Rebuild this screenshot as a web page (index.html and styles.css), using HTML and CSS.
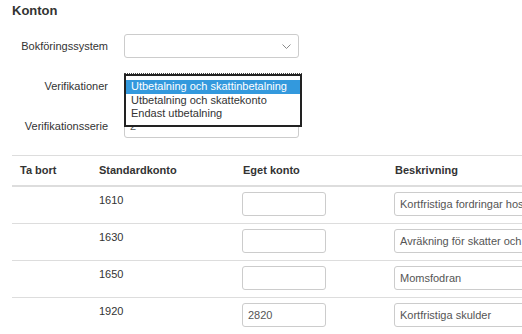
FILE: index.html
```html
<!DOCTYPE html>
<html lang="sv">
<head>
<meta charset="utf-8">
<link rel="stylesheet" href="styles.css">
</head>
<body>
<div class="page">
  <h2 class="title">Konton</h2>
  <div class="form">
    <label class="label">Bokföringssystem</label>
    <div class="control">
      <div class="select">
        <svg class="chev" width="9" height="5" viewBox="0 0 9 5"><polyline points="0.5,0.5 4.5,4.5 8.5,0.5" fill="none" stroke="#8a8a8a" stroke-width="1"/></svg>
      </div>
    </div>
    <label class="label">Verifikationer</label>
    <div class="control">
      <div class="select"></div>
      <div class="listbox">
        <div class="listbox-inner">
          <div class="opt selected">Utbetalning och skattinbetalning</div>
          <div class="opt">Utbetalning och skattekonto</div>
          <div class="opt">Endast utbetalning</div>
        </div>
      </div>
    </div>
    <label class="label">Verifikationsserie</label>
    <div class="control">
      <div class="input wide">2</div>
    </div>
  </div>

  <table class="grid">
    <colgroup>
      <col class="c1"><col class="c2"><col class="c3"><col class="c4">
    </colgroup>
    <thead>
      <tr><th>Ta bort</th><th>Standardkonto</th><th>Eget konto</th><th>Beskrivning</th></tr>
    </thead>
    <tbody>
      <tr><td></td><td>1610</td><td><div class="input small"></div></td><td><div class="input desc">Kortfristiga fordringar hos koncernföretag</div></td></tr>
      <tr><td></td><td>1630</td><td><div class="input small"></div></td><td><div class="input desc">Avräkning för skatter och avgifter</div></td></tr>
      <tr><td></td><td>1650</td><td><div class="input small"></div></td><td><div class="input desc">Momsfodran</div></td></tr>
      <tr><td></td><td>1920</td><td><div class="input small">2820</div></td><td><div class="input desc">Kortfristiga skulder</div></td></tr>
    </tbody>
  </table>
</div>
</body>
</html>
```

FILE: styles.css
```css
html, body {
  margin: 0;
  padding: 0;
  overflow: hidden;
  background: #fff;
}
body {
  font-family: "Liberation Sans", Arial, sans-serif;
  font-size: 11px;
  color: #333;
}
.page {
  padding: 3px 0 0 12px;
}
.title {
  margin: 0;
  font-size: 13px;
  line-height: 15px;
  font-weight: bold;
  color: #333;
}
.form {
  margin-top: 16px;
  display: grid;
  grid-template-columns: 96px 175px;
  column-gap: 16px;
  row-gap: 16px;
}
.label {
  text-align: right;
  line-height: 24px;
  height: 24px;
  color: #333;
}
.control {
  position: relative;
  height: 24px;
}
.select, .input {
  box-sizing: border-box;
  height: 24px;
  border: 1px solid #ccc;
  border-radius: 3px;
  background: #fff;
  line-height: 22px;
  padding: 0 5px;
  color: #555;
  white-space: nowrap;
  overflow: hidden;
}
.select {
  position: relative;
}
.chev {
  position: absolute;
  right: 7px;
  top: 9px;
}
.listbox {
  position: absolute;
  left: 0;
  top: -1px;
  width: 178px;
  box-sizing: border-box;
  border-top: 1px dotted #444;
  z-index: 2;
}
.listbox-inner {
  border: 2px solid #222;
  border-top-width: 2px;
  background: #fff;
  padding: 4px 0 4px 0;
}
.opt {
  line-height: 13px;
  height: 13.5px;
  padding-left: 5px;
  color: #333;
  white-space: nowrap;
}
.opt.selected {
  background: #3399dd;
  color: #fff;
}
.grid {
  margin-top: 17px;
  border-collapse: collapse;
  table-layout: fixed;
  width: 600px;
}
.c1 { width: 79px; }
.c2 { width: 144px; }
.c3 { width: 152px; }
.c4 { width: 225px; }
.grid th {
  text-align: left;
  font-weight: bold;
  line-height: 15px;
  padding: 7px 8px;
  border-top: 1px solid #ddd;
  border-bottom: 2px solid #ddd;
  color: #333;
}
.grid td {
  line-height: 15px;
  padding: 6px 8px;
  vertical-align: top;
  border-top: 1px solid #ddd;
  color: #333;
}
.grid td .input {
  margin: -1px 0 1px -1px;
}
.input.small {
  width: 84px;
}
.input.desc {
  width: 200px;
}
```
